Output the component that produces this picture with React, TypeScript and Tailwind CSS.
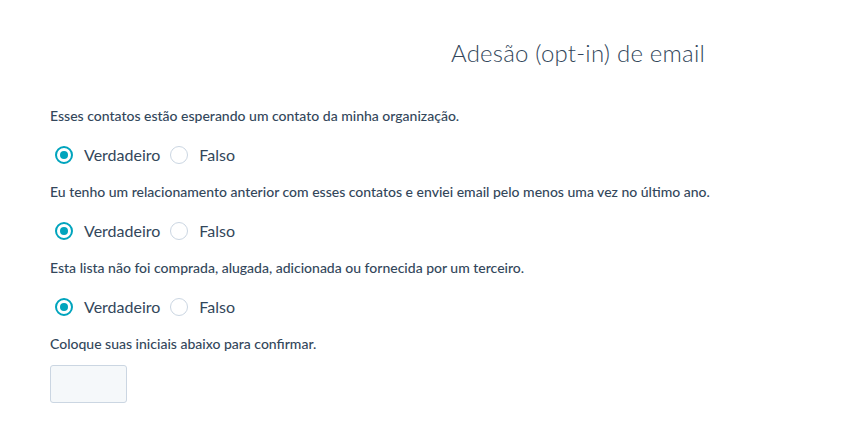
const questions = [
  'Esses contatos estão esperando um contato da minha organização.',
  'Eu tenho um relacionamento anterior com esses contatos e enviei email pelo menos uma vez no último ano.',
  'Esta lista não foi comprada, alugada, adicionada ou fornecida por um terceiro.',
];

function Radio({ checked, label }: { checked: boolean; label: string }) {
  return (
    <label className="flex h-[18px] items-center">
      <span
        className={
          checked
            ? 'flex h-[18px] w-[18px] items-center justify-center rounded-full border-2 border-[#00a4bd] bg-white'
            : 'flex h-[18px] w-[18px] items-center justify-center rounded-full border border-[#cbd6e2] bg-white'
        }
      >
        {checked && <span className="h-[8px] w-[8px] rounded-full bg-[#00a4bd]" />}
      </span>
      <span className="ml-[11px] text-[16px] leading-[18px] text-[#33475b]">{label}</span>
    </label>
  );
}

export default function App() {
  return (
    <div
      className="h-[421px] w-[841px] bg-white text-[#33475b]"
      style={{ fontFamily: 'Lato, "Noto Sans", sans-serif' }}
    >
      <div className="pl-[451px] pt-[38px] text-[24px] font-light leading-[30px] tracking-[0.2px]">
        Adesão (opt-in) de email
      </div>
      <div className="pl-[50px] pt-[39px]">
        {questions.map((q) => (
          <div key={q} className="mb-[19px]">
            <p className="text-[14px] font-medium leading-[18px]">{q}</p>
            <div className="mt-[21px] flex items-center gap-[10px] pl-[5px]">
              <Radio checked label="Verdadeiro" />
              <Radio checked={false} label="Falso" />
            </div>
          </div>
        ))}
        <p className="text-[14px] font-medium leading-[18px]">
          Coloque suas iniciais abaixo para confirmar.
        </p>
        <div className="mt-[12px] h-[38px] w-[77px] rounded-[3px] border border-[#cbd6e2] bg-[#f5f8fa]" />
      </div>
    </div>
  );
}
